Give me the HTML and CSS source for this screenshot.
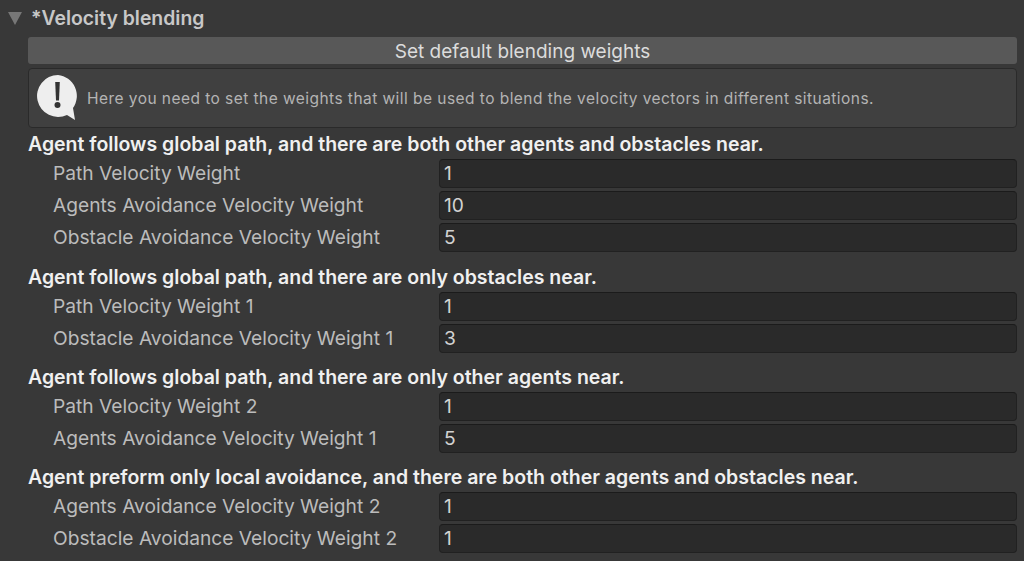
FILE: index.html
```html
<!DOCTYPE html>
<html lang="en">
<head>
  <meta charset="UTF-8">
  <title>Velocity blending</title>
  <link rel="stylesheet" href="styles.css">
</head>
<body>
<div class="foldout">
  <span class="arrow"></span>
  <span class="foldout-title">*Velocity blending</span>
</div>
<div class="content">
  <button class="btn">Set default blending weights</button>
  <div class="helpbox">
    <svg class="help-icon" width="46" height="46" viewBox="0 0 46 46">
      <path d="M21 0a21 21 0 1 0 9 40l8 5-2-12A21 21 0 0 0 21 0z" fill="#eeeeee"/>
      <path d="M18.200 7h4.600l-.8 18.500h-3z" fill="#333333"/>
      <circle cx="20.500" cy="30" r="3" fill="#333333"/>
    </svg>
    <span>Here you need to set the weights that will be used to blend the velocity vectors in different situations.</span>
  </div>

  <section class="group">
    <h3>Agent follows global path, and there are both other agents and obstacles near.</h3>
    <div class="row"><label>Path Velocity Weight</label><div class="field">1</div></div>
    <div class="row"><label>Agents Avoidance Velocity Weight</label><div class="field">10</div></div>
    <div class="row"><label>Obstacle Avoidance Velocity Weight</label><div class="field">5</div></div>
  </section>

  <section class="group">
    <h3>Agent follows global path, and there are only obstacles near.</h3>
    <div class="row"><label>Path Velocity Weight 1</label><div class="field">1</div></div>
    <div class="row"><label>Obstacle Avoidance Velocity Weight 1</label><div class="field">3</div></div>
  </section>

  <section class="group">
    <h3>Agent follows global path, and there are only other agents near.</h3>
    <div class="row"><label>Path Velocity Weight 2</label><div class="field">1</div></div>
    <div class="row"><label>Agents Avoidance Velocity Weight 1</label><div class="field">5</div></div>
  </section>

  <section class="group">
    <h3>Agent preform only local avoidance, and there are both other agents and obstacles near.</h3>
    <div class="row"><label>Agents Avoidance Velocity Weight 2</label><div class="field">1</div></div>
    <div class="row"><label>Obstacle Avoidance Velocity Weight 2</label><div class="field">1</div></div>
  </section>
</div>
</body>
</html>
```

FILE: styles.css
```css
html, body {
  height: 100%;
}

body {
  margin: 0;
  overflow: hidden;
  background: #383838;
  color: #c4c4c4;
  font-family: "Inter", "Liberation Sans", sans-serif;
  font-size: 19.2px;
}

.foldout {
  display: flex;
  align-items: center;
  height: 37px;
  padding-left: 8px;
}

.arrow {
  width: 0;
  height: 0;
  border-left: 7.500px solid transparent;
  border-right: 7.500px solid transparent;
  border-top: 13px solid #777777;
  margin-right: 9px;
}

.foldout-title {
  padding-bottom: 2px;
  font-size: 19.400px;
  font-weight: 600;
  color: #c8c8c8;
}

.content {
  padding: 0 7px 0 28px;
}

.btn {
  display: block;
  width: 100%;
  height: 27px;
  padding: 2px 0 0;
  border: 0;
  border-radius: 3px;
  background: #585858;
  color: #dcdcdc;
  font: inherit;
  font-size: 19px;
}

.helpbox {
  display: flex;
  align-items: center;
  gap: 4px;
  box-sizing: border-box;
  height: 60px;
  margin-top: 4px;
  padding-left: 8px;
  background: #404040;
  border: 1px solid #2a2a2a;
  border-radius: 4px;
  font-size: 15.500px;
  letter-spacing: 0.45px;
  color: #b4b4b4;
}

.help-icon {
  flex: none;
}

.group {
  margin-bottom: 8px;
}

.group:first-of-type {
  margin-bottom: 9px;
}

.group h3 {
  margin: 0;
  padding-top: 4px;
  height: 31px;
  box-sizing: border-box;
  font-size: 19.500px;
  font-weight: 600;
  line-height: 24px;
  color: #f0f0f0;
}

.row {
  display: flex;
  align-items: center;
  height: 29px;
  margin-bottom: 3px;
}

.row label {
  width: 411px;
  padding: 0 0 2px 25px;
  box-sizing: border-box;
  flex: none;
  color: #bcbcbc;
}

.field {
  flex: 1;
  box-sizing: border-box;
  height: 29px;
  padding-left: 4px;
  line-height: 26px;
  background: #2a2a2a;
  border: 1px solid #212121;
  border-top-color: #1b1b1b;
  border-radius: 4px;
  color: #d2d2d2;
}
```
